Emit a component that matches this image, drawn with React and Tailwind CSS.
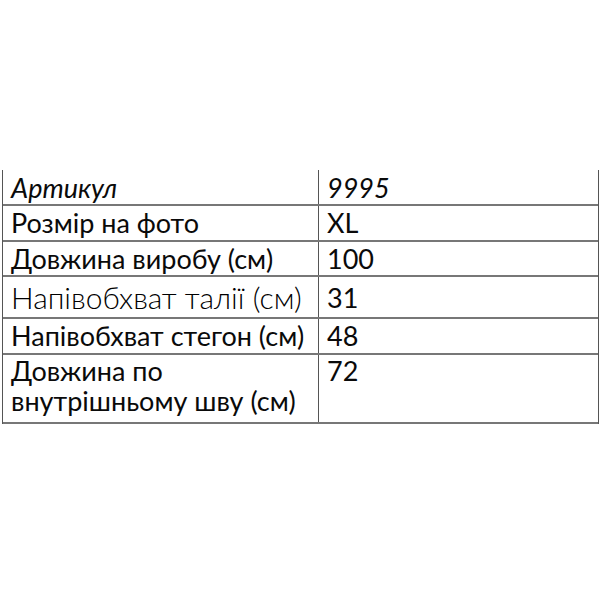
import React from 'react';

const rows = [
  { label: 'Артикул', value: '9995', h: 'h-[34px]', pad: 'pt-[1px]', italic: true },
  { label: 'Розмір на фото', value: 'XL', h: 'h-[36px]', pad: 'pt-0' },
  { label: 'Довжина виробу (см)', value: '100', h: 'h-[35px]', pad: 'pt-0' },
  { label: 'Напівобхват талії (см)', value: '31', h: 'h-[42px]', pad: 'pt-[4px]', light: true },
  { label: 'Напівобхват стегон (см)', value: '48', h: 'h-[36px]', pad: 'pt-0' },
  { label: 'Довжина по внутрішньому шву (см)', value: '72', h: 'h-[71px]', pad: 'pt-[1px]', wrap: true },
];

export default function App() {
  return (
    <div className="w-[600px] h-[600px] bg-white pt-[170px] pl-[2px]" style={{ fontFamily: 'Lato, "Noto Sans", sans-serif' }}>
      <div className="w-[597px] border-l border-r border-[#555] text-[#0a0a0a]">
        {rows.map((r, i) => (
          <div
            key={i}
            className={`flex ${r.h} ${i > 0 ? 'border-t-2 border-[#777]' : ''} ${i === rows.length - 1 ? 'border-b-2 border-[#777]' : ''}`}
          >
            <div
              className={`w-[316px] shrink-0 border-r border-[#555] pl-[8px] whitespace-nowrap ${r.pad} ${r.wrap ? 'leading-[30px]' : 'leading-[33px]'} ${r.light ? 'text-[30px] font-light text-[#000]' : 'text-[27px]'} ${r.italic ? 'italic' : ''}`}
            >
              {r.wrap ? (
                <>
                  Довжина по<br />внутрішньому шву (см)
                </>
              ) : (
                r.label
              )}
            </div>
            <div className={`flex-1 pl-[8px] text-[27px] ${r.pad} ${r.wrap ? 'leading-[30px]' : 'leading-[33px]'} ${r.italic ? 'italic' : ''}`}>
              {r.value}
            </div>
          </div>
        ))}
      </div>
    </div>
  );
}
